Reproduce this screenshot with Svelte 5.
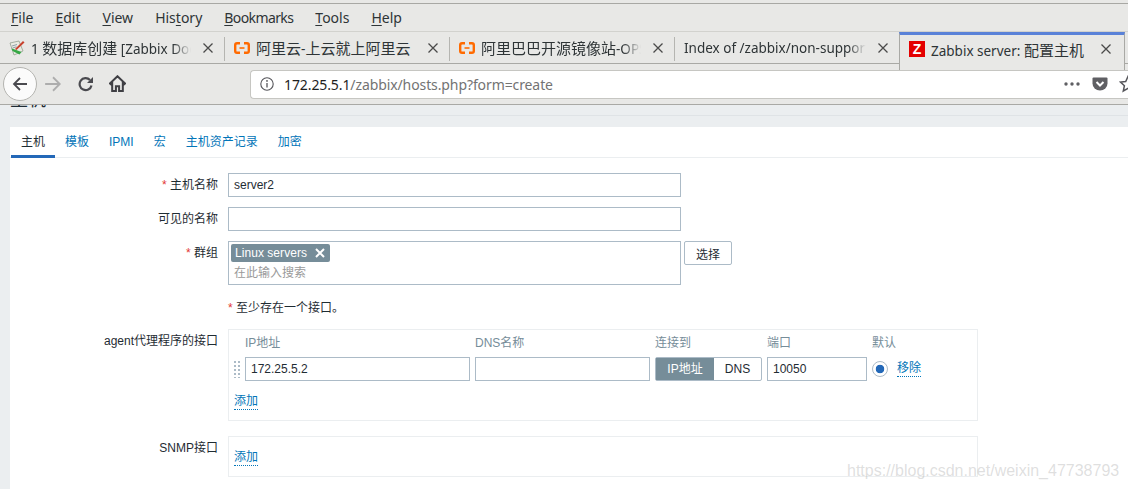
<script>
	const menu = [
		["F", "ile"],
		["E", "dit"],
		["V", "iew"],
		["", "His", "t", "ory"],
		["B", "ookmarks"],
		["T", "ools"],
		["H", "elp"],
	];
	const browserTabs = [
		{ icon: "doc", title: "1 数据库创建 [Zabbix Documentation 4.0]", fade: true },
		{ icon: "ali", title: "阿里云-上云就上阿里云", fade: false },
		{ icon: "ali", title: "阿里巴巴开源镜像站-OPSX镜像站", fade: true },
		{ icon: "", title: "Index of /zabbix/non-supported/rhel", fade: true },
		{ icon: "zbx", title: "Zabbix server: 配置主机", fade: false, active: true },
	];
	const formTabs = ["主机", "模板", "IPMI", "宏", "主机资产记录", "加密"];

	// the tab font has smaller latin than cjk
	const pieces = (s) => s.match(/[\u4e00-\u9fff]+|[^\u4e00-\u9fff]+/g);
	const isCjk = (s) => /[\u4e00-\u9fff]/.test(s);
</script>

<div class="window">
	<div class="menubar">
		{#each menu as m}
			<span class="menu-item">
				{#if m.length === 2}
					<u>{m[0]}</u>{m[1]}
				{:else}
					{m[1]}<u>{m[2]}</u>{m[3]}
				{/if}
			</span>
		{/each}
	</div>

	<div class="tabstrip">
		{#each browserTabs as t}
			<div class="btab" class:active={t.active}>
				{#if t.icon === "doc"}
					<svg class="fav" viewBox="0 0 16 16">
						<path d="M1 3l9-2 4 10-9 4z" fill="#e9ebe2" stroke="#94a08f" stroke-width=".8" />
						<path d="M3 6l5-1.500M3.500 8l4-1.200" stroke="#7b8b9b" stroke-width=".8" />
						<path d="M2.500 8.500l2 .5 8 3-2 2.500-7-3.500z" fill="#35a845" />
						<path d="M6 9l8-8 1.500 1.500-8 7.500z" fill="#c8402c" />
					</svg>
				{:else if t.icon === "ali"}
					<svg class="fav" viewBox="0 0 16 16">
						<path d="M6 3.200H3Q1.200 3.200 1.200 5v6q0 1.800 1.800 1.800h3M10 3.200h3q1.800 0 1.800 1.800v6q0 1.800-1.800 1.800h-3" fill="none" stroke="#ff6a00" stroke-width="2.400" />
						<path d="M5.500 8h5" stroke="#ff6a00" stroke-width="1.600" />
					</svg>
				{:else if t.icon === "zbx"}
					<span class="zbx">Z</span>
				{/if}
				<span class="btitle" class:fade={t.fade}>{#each pieces(t.title) as p}<span class:cjk={isCjk(p)}>{p}</span>{/each}</span>
				<svg class="bclose" viewBox="0 0 12 12"><path d="M1.500 1.500l9 9M10.500 1.500l-9 9" stroke="#4a4a4a" stroke-width="1.300" /></svg>
			</div>
		{/each}
	</div>

	<div class="navbar">
		<div class="back">
			<svg viewBox="0 0 16 16" width="16" height="16"><path d="M15 8H2M8 2L2 8l6 6" fill="none" stroke="#4a4a4f" stroke-width="1.800" /></svg>
		</div>
		<svg class="fwd" viewBox="0 0 16 16" width="18" height="18"><path d="M1 8h13M8 2l6 6-6 6" fill="none" stroke="#adadad" stroke-width="1.600" /></svg>
		<svg class="reload" viewBox="0 0 16 16" width="16" height="16"><path d="M13.500 9.500A6 6 0 1 1 12 4" fill="none" stroke="#4a4a4f" stroke-width="2.200" /><path d="M15 1v6H9z" fill="#4a4a4f" /></svg>
		<svg class="home" viewBox="0 0 16 16" width="17" height="17"><path d="M8 1.200L.8 8l1.200 1L3 8.200V15h3.500v-4.500h3V15H13V8.200L14 9l1.200-1z" fill="none" stroke="#3f3f44" stroke-width="1.900" /></svg>
		<div class="urlbar">
			<svg class="info" viewBox="0 0 14 14" width="14" height="14"><circle cx="7" cy="7" r="6.200" fill="none" stroke="#55555a" stroke-width="1.100" /><path d="M7 6v4.500" stroke="#55555a" stroke-width="1.300" /><circle cx="7" cy="3.900" r=".9" fill="#55555a" /></svg>
			<span class="url"><b>172.25.5.1</b>/zabbix/hosts.php?form=create</span>
			<svg class="dots" viewBox="0 0 16 4" width="16" height="4"><circle cx="2" cy="2" r="1.700" /><circle cx="8" cy="2" r="1.700" /><circle cx="14" cy="2" r="1.700" /></svg>
			<svg class="pocket" viewBox="0 0 16 16" width="16" height="16"><path d="M1.500 1.500h13q1 0 1 1v5a7.500 7 0 0 1-15 0v-5q0-1 1-1z" fill="#5f5f63" /><path d="M4.500 6L8 9.500 11.500 6" fill="none" stroke="#fff" stroke-width="2" /></svg>
			<svg class="star" viewBox="0 0 18 18" width="18" height="18"><path d="M9 1.500l2.300 5 5.200.6-3.900 3.600 1.100 5.300L9 13.300 4.300 16l1.100-5.300L1.500 7.100l5.200-.6z" fill="none" stroke="#55555a" stroke-width="1.500" /></svg>
		</div>
	</div>

	<div class="page">
		<h1>主机</h1>
		<div class="rule"></div>
		<div class="panel">
			<div class="form-tabs">
				{#each formTabs as t, i}
					<span class="ftab" class:on={i === 0}>{t}</span>
				{/each}
			</div>

			<div class="form">
				<div class="lbl"><em>*</em> 主机名称</div>
				<div class="field"><div class="input wide">server2</div></div>

				<div class="lbl">可见的名称</div>
				<div class="field"><div class="input wide"></div></div>

				<div class="lbl"><em>*</em> 群组</div>
				<div class="field group-row">
					<div class="multi">
						<span class="tag">Linux servers
							<svg viewBox="0 0 10 10" width="10" height="10"><path d="M1 1l8 8M9 1L1 9" stroke="#fff" stroke-width="2" /></svg>
						</span>
						<span class="hint">在此输入搜索</span>
					</div>
					<button class="pick">选择</button>
				</div>

				<div></div>
				<div class="field note"><em>*</em> 至少存在一个接口。</div>

				<div class="lbl">agent代理程序的接口</div>
				<div class="field">
					<div class="box agent">
						<div class="cols">
							<span>IP地址</span><span>DNS名称</span><span>连接到</span><span>端口</span><span>默认</span>
						</div>
						<div class="iface">
							<span class="grip"></span>
							<div class="cols row">
								<div class="input">172.25.5.2</div>
								<div class="input"></div>
								<div class="toggle"><span class="sel">IP地址</span><span>DNS</span></div>
								<div class="input">10050</div>
								<div class="default">
									<span class="radio"></span>
									<a href="#top">移除</a>
								</div>
							</div>
						</div>
						<a class="add" href="#top">添加</a>
					</div>
				</div>

				<div class="lbl snmp">SNMP接口</div>
				<div class="field">
					<div class="box snmp-box"><a class="add" href="#top">添加</a></div>
				</div>
			</div>
		</div>
	</div>
	<div class="mark">https://blog.csdn.net/weixin_47738793</div>
</div>

<style>
	:global(body) {
		margin: 0;
		overflow: hidden;
	}
	.window {
		position: relative;
		width: 1128px;
		height: 489px;
		overflow: hidden;
		display: flex;
		flex-direction: column;
		background: #e8e8e6;
		font-family: "Noto Sans", "Noto Sans CJK SC", sans-serif;
		box-sizing: border-box;
		padding-top: 3px;
		color: #2e3436;
	}
	.menubar {
		height: 29px;
		flex: none;
		box-sizing: border-box;
		border-top: 1px solid #a8a8a4;
		border-bottom: 1px solid #d2d2ce;
		display: flex;
		align-items: center;
		padding-left: 11px;
		gap: 22px;
		font-size: 14px;
	}
	.menu-item u {
		text-underline-offset: 2px;
	}
	.menu-item:nth-child(5) {
		letter-spacing: -0.6px;
	}
	.tabstrip {
		height: 32px;
		flex: none;
		box-sizing: border-box;
		display: flex;
		border-bottom: 1px solid #a9a9a5;
	}
	.btab {
		width: 225px;
		height: 31px;
		box-sizing: border-box;
		display: flex;
		align-items: center;
		padding: 0 9px;
		gap: 6px;
		font-size: 13.5px;
		position: relative;
	}
	.btab:not(.active):not(:nth-child(4))::after {
		content: "";
		position: absolute;
		right: 0;
		top: 5px;
		height: 24px;
		width: 1px;
		background: #b5b5b1;
	}
	.btab.active {
		height: 38px;
		z-index: 2;
		background: #e8e8e6;
		border-top: 3px solid #5a82d8;
		border-left: 1px solid #a9a9a5;
		border-right: 1px solid #a9a9a5;
		padding-bottom: 7px;
		margin-left: -1px;
		width: 226px;
		padding-right: 10px;
	}
	.fav {
		width: 16px;
		height: 16px;
		flex: none;
	}
	.zbx {
		width: 16px;
		height: 16px;
		flex: none;
		background: #e40000;
		color: #fff;
		font: bold 14px/16px "Liberation Sans", sans-serif;
		text-align: center;
	}
	.btitle {
		flex: 1;
		min-width: 0;
		white-space: nowrap;
		overflow: hidden;
	}
	.btitle .cjk {
		font-size: 15px;
	}
	.btitle.fade {
		mask-image: linear-gradient(to right, #000 calc(100% - 18px), transparent);
	}
	.bclose {
		width: 12px;
		height: 12px;
		flex: none;
		margin-left: 5px;
		margin-right: 2px;
	}
	.navbar {
		height: 41px;
		flex: none;
		box-sizing: border-box;
		border-bottom: 1px solid #a9a9a5;
		position: relative;
		display: flex;
		align-items: center;
		padding-left: 3px;
		padding-bottom: 1px;
	}
	.back {
		width: 32px;
		height: 32px;
		border: 1px solid #b4b4b0;
		border-radius: 50%;
		background: #fbfbfb;
		display: flex;
		align-items: center;
		justify-content: center;
		flex: none;
	}
	.fwd {
		margin-left: 7px;
		flex: none;
	}
	.reload {
		margin-left: 16px;
		flex: none;
	}
	.home {
		margin-left: 15px;
		flex: none;
	}
	.urlbar {
		margin-left: 124px;
		flex: 1;
		height: 29px;
		box-sizing: border-box;
		margin-top: 1px;
		background: #fff;
		border: 1px solid #c6c6c2;
		border-right: 0;
		border-radius: 4px 0 0 4px;
		display: flex;
		align-items: center;
		padding-left: 9px;
		font-size: 14px;
		color: #737373;
	}
	.info {
		flex: none;
	}
	.url {
		margin-left: 10px;
		flex: 1;
		white-space: nowrap;
		letter-spacing: -0.1px;
	}
	.url b {
		font-weight: 400;
		color: #1e1e1e;
	}
	.dots {
		fill: #5f5f63;
		flex: none;
	}
	.pocket {
		margin-left: 12px;
		flex: none;
	}
	.star {
		margin-left: 11px;
		margin-right: -9px;
		flex: none;
	}
	.page {
		flex: 1;
		min-height: 0;
		overflow: hidden;
		background: #ebeef0;
		padding: 0 0 0 10px;
		font-family: "Liberation Sans", "Noto Sans CJK SC", sans-serif;
		font-size: 12px;
		color: #1f2c33;
	}
	h1 {
		margin: -15px 0 0;
		font-size: 18px;
		font-weight: 400;
		line-height: 21px;
	}
	.rule {
		height: 1px;
		background: #dfe3e6;
		margin: 4px 0 11px;
	}
	.panel {
		background: #fff;
		height: 400px;
	}
	.form-tabs {
		height: 31px;
		box-sizing: border-box;
		border-bottom: 1px solid #ebeef0;
		display: flex;
		padding-left: 1px;
	}
	.ftab {
		height: 31px;
		box-sizing: border-box;
		padding: 0 10px;
		line-height: 30px;
		color: #0275b8;
	}
	.ftab.on {
		color: #1f2c33;
		border-bottom: 3px solid #2368b8;
	}
	.form {
		display: grid;
		grid-template-columns: 208px 1fr;
		column-gap: 10px;
		padding-top: 15px;
	}
	.lbl {
		text-align: right;
		line-height: 24px;
	}
	.lbl em,
	.note em {
		color: #e33734;
		font-style: normal;
	}
	.field {
		margin-bottom: 10px;
		min-height: 0;
	}
	.input {
		height: 24px;
		box-sizing: border-box;
		border: 1px solid #acbbc7;
		background: #fff;
		line-height: 22px;
		padding: 0 5px;
		font-size: 12px;
	}
	.wide {
		width: 453px;
	}
	.group-row {
		display: flex;
		gap: 3px;
		align-items: flex-start;
	}
	.multi {
		width: 453px;
		height: 44px;
		box-sizing: border-box;
		border: 1px solid #acbbc7;
		padding: 2px;
		display: flex;
		flex-direction: column;
		align-items: flex-start;
	}
	.tag {
		background: #768d99;
		color: #fff;
		height: 18px;
		line-height: 18px;
		border-radius: 2px;
		padding: 0 4px;
		display: flex;
		align-items: center;
		gap: 8px;
		letter-spacing: 0.05px;
	}
	.tag svg {
		margin-right: 1px;
	}
	.hint {
		color: #9a9a9a;
		padding-left: 3px;
		line-height: 22px;
	}
	.pick {
		width: 48px;
		height: 24px;
		box-sizing: border-box;
		border: 1px solid #acbbc7;
		border-radius: 2px;
		background: #fff;
		font: inherit;
		color: inherit;
		padding: 0;
	}
	.note {
		line-height: 14px;
		margin-top: 6px;
		margin-bottom: 14px;
	}
	.box {
		width: 750px;
		box-sizing: border-box;
		border: 1px solid #ebeef0;
	}
	.agent {
		height: 92px;
		padding: 0 0 0 5px;
		margin-bottom: 5px;
	}
	.cols {
		display: grid;
		grid-template-columns: 225px 175px 107px 100px auto;
		column-gap: 5px;
		margin-left: 11px;
		color: #768d99;
		line-height: 26px;
		height: 27px;
	}
	.iface {
		position: relative;
		height: 24px;
	}
	.row {
		height: 24px;
		color: #1f2c33;
	}
	.grip {
		position: absolute;
		left: -1px;
		top: 3px;
		width: 8px;
		height: 18px;
		background-image: radial-gradient(#acbbc7 1.2px, transparent 1.3px);
		background-size: 4px 4px;
	}
	.toggle {
		display: flex;
		height: 24px;
		box-sizing: border-box;
		border: 1px solid #acbbc7;
		border-radius: 2px;
		line-height: 22px;
		text-align: center;
	}
	.toggle span {
		flex: 1;
	}
	.toggle .sel {
		flex: none;
		width: 58px;
		background: #768d99;
		color: #fff;
	}
	.default {
		display: flex;
		align-items: center;
		gap: 9px;
	}
	.radio {
		width: 16px;
		height: 16px;
		box-sizing: border-box;
		border: 1px solid #acbbc7;
		border-radius: 50%;
		background: radial-gradient(#2368b8 4px, #fff 4.6px);
	}
	a {
		color: #0275b8;
		text-decoration: none;
		border-bottom: 1px dotted #0275b8;
		line-height: 15px;
	}
	.add {
		display: inline-block;
		margin-top: 13px;
	}
	.snmp {
		line-height: 24px;
	}
	.snmp-box {
		height: 41px;
		padding: 0 5px;
	}
	.mark {
		position: absolute;
		left: 847px;
		top: 462px;
		font: 16px "Liberation Sans", sans-serif;
		color: rgba(170, 170, 170, 0.38);
		white-space: nowrap;
	}
</style>
